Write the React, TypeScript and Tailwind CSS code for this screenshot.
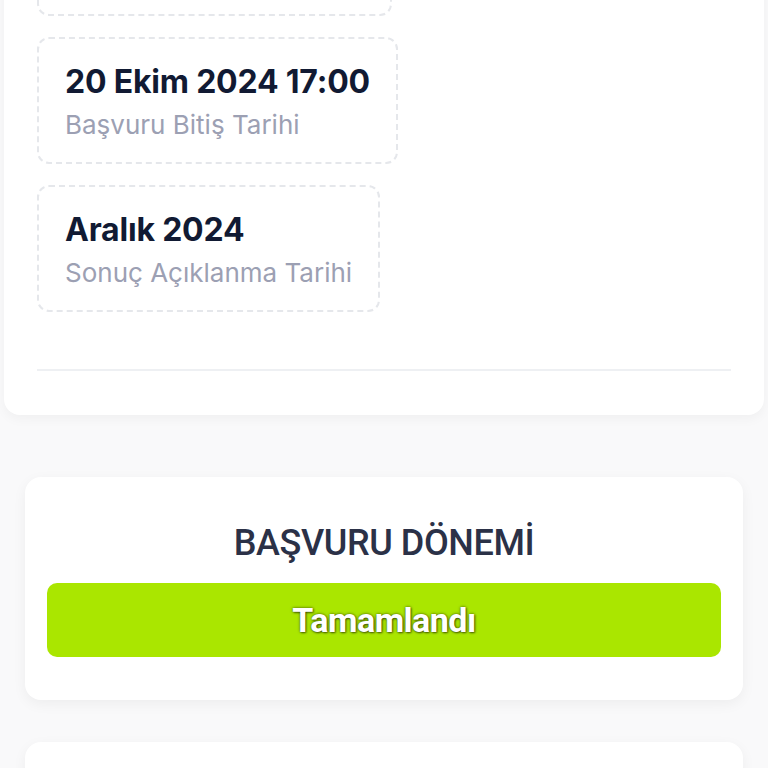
import React from "react";

const DateBox = ({ title, label }: { title: string; label: string }) => (
    <div className="w-fit rounded-xl border-2 border-dashed border-[#e5e7eb] pl-[26px] pr-[26px] pt-[23px] pb-[21px] flex flex-col gap-[7px]">
        <div className="text-[#111a33] text-[32px] leading-[40px] font-bold tracking-[-0.2px]">{title}</div>
        <div className="text-[#9ca0b3] text-[26px] leading-[32px]">{label}</div>
    </div>
);

const App = () => {
    return (
        <div className="w-[768px] h-[768px] overflow-hidden bg-[#f9f9fa] font-['Inter',sans-serif]">
            {/* Dates card (scrolled up) */}
            <div className="mx-[4px] -mt-[120px] bg-white rounded-b-2xl shadow-[0_4px_12px_rgba(0,0,0,0.04)] pl-[33px] pr-[33px] pb-[44px] flex flex-col">
                <div className="flex flex-col gap-[21px]">
                    <div className="w-[355px] h-[136px] rounded-xl border-2 border-dashed border-[#e5e7eb]" />
                    <DateBox title="20 Ekim 2024 17:00" label="Başvuru Bitiş Tarihi" />
                    <DateBox title="Aralık 2024" label="Sonuç Açıklanma Tarihi" />
                </div>
                <div className="mt-[57px] h-[2px] bg-[#eef0f3]" />
            </div>

            {/* Application period card */}
            <div className="mx-[25px] mt-[62px] w-[718px] bg-white rounded-2xl shadow-[0_4px_14px_rgba(0,0,0,0.05)] px-[22px] pt-[44px] pb-[43px] flex flex-col items-center">
                <div className="text-[#2b3147] text-[36px] leading-[44px] font-medium font-['Roboto',sans-serif] tracking-[-0.4px]">
                    BAŞVURU DÖNEMİ
                </div>
                <div className="mt-[18px] w-full h-[74px] rounded-[10px] bg-[#aae600] flex items-center justify-center">
                    <span className="text-white text-[34px] font-bold font-['Roboto',sans-serif] tracking-[-0.5px] [text-shadow:0_0_3px_rgba(0,0,0,0.6),1px_1px_2px_rgba(0,0,0,0.45)]">
                        Tamamlandı
                    </span>
                </div>
            </div>

            {/* Next card */}
            <div className="mx-[25px] mt-[42px] w-[718px] h-[100px] bg-white rounded-2xl shadow-[0_4px_14px_rgba(0,0,0,0.05)]" />
        </div>
    );
};

export default App;
